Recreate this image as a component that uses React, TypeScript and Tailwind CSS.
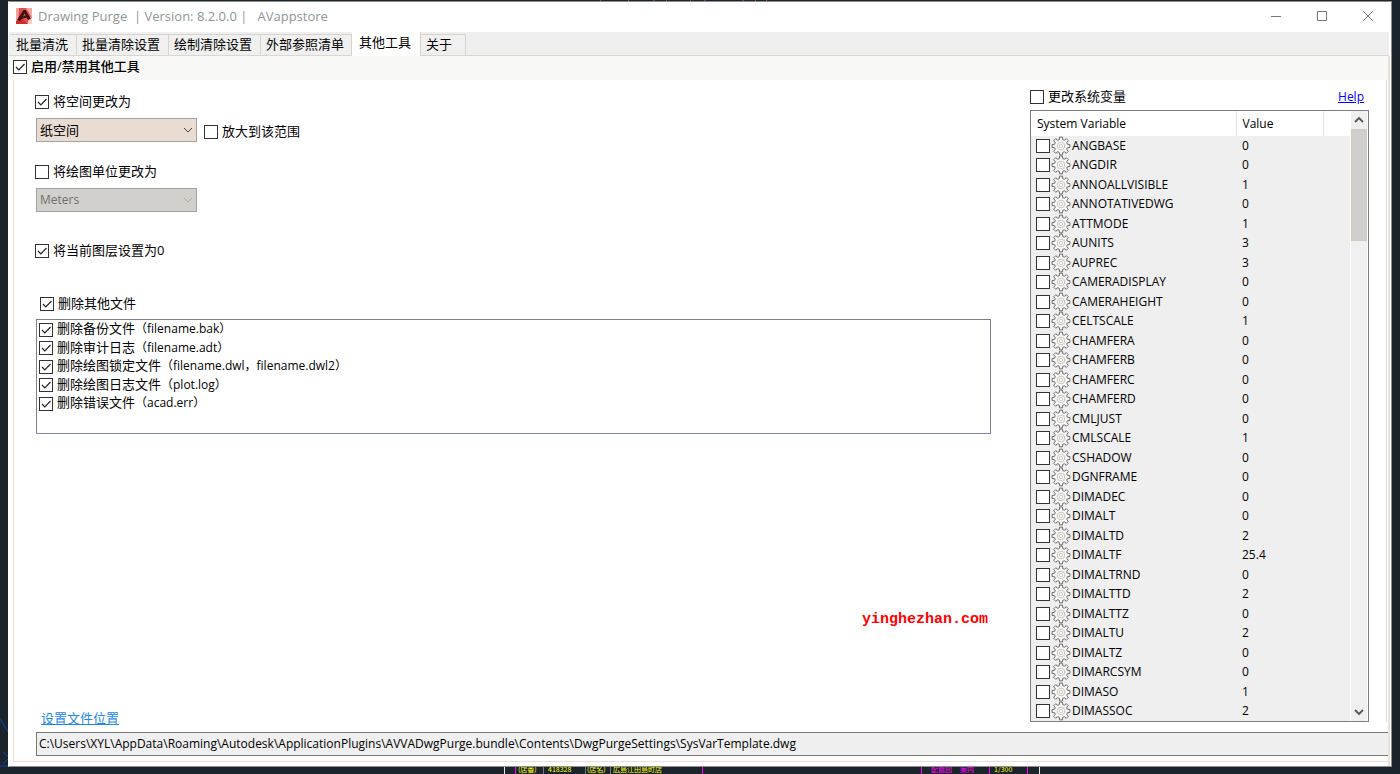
import { useState } from "react";
import type { ReactNode } from "react";

const sysVars = [
    { name: 'ANGBASE', value: '0' },
    { name: 'ANGDIR', value: '0' },
    { name: 'ANNOALLVISIBLE', value: '1' },
    { name: 'ANNOTATIVEDWG', value: '0' },
    { name: 'ATTMODE', value: '1' },
    { name: 'AUNITS', value: '3' },
    { name: 'AUPREC', value: '3' },
    { name: 'CAMERADISPLAY', value: '0' },
    { name: 'CAMERAHEIGHT', value: '0' },
    { name: 'CELTSCALE', value: '1' },
    { name: 'CHAMFERA', value: '0' },
    { name: 'CHAMFERB', value: '0' },
    { name: 'CHAMFERC', value: '0' },
    { name: 'CHAMFERD', value: '0' },
    { name: 'CMLJUST', value: '0' },
    { name: 'CMLSCALE', value: '1' },
    { name: 'CSHADOW', value: '0' },
    { name: 'DGNFRAME', value: '0' },
    { name: 'DIMADEC', value: '0' },
    { name: 'DIMALT', value: '0' },
    { name: 'DIMALTD', value: '2' },
    { name: 'DIMALTF', value: '25.4' },
    { name: 'DIMALTRND', value: '0' },
    { name: 'DIMALTTD', value: '2' },
    { name: 'DIMALTTZ', value: '0' },
    { name: 'DIMALTU', value: '2' },
    { name: 'DIMALTZ', value: '0' },
    { name: 'DIMARCSYM', value: '0' },
    { name: 'DIMASO', value: '1' },
    { name: 'DIMASSOC', value: '2' },
];

const tabs = [
    { name: '批量清洗', width: 'w-[66px]' },
    { name: '批量清除设置', width: 'w-[92px]' },
    { name: '绘制清除设置', width: 'w-[92px]' },
    { name: '外部参照清单', width: 'w-[91px]' },
    { name: '其他工具', width: 'w-[69px]' },
    { name: '关于', width: 'w-[45px]' },
];

const otherFiles = [
    { label: '删除备份文件', files: '（filename.bak）' },
    { label: '删除审计日志', files: '（filename.adt）' },
    { label: '删除绘图锁定文件', files: '（filename.dwl，filename.dwl2）' },
    { label: '删除绘图日志文件', files: '（plot.log）' },
    { label: '删除错误文件', files: '（acad.err）' },
];

const Tick = ({ id, checked = false, label }: { id?: string, checked?: boolean, label?: string }) => {
    const [on, setOn] = useState(checked);
    return (
        <span className="grid shrink-0 size-[14px]">
            <input
                id={id}
                type="checkbox"
                aria-label={label}
                checked={on}
                onChange={() => setOn(!on)}
                className="col-start-1 row-start-1 size-[14px] appearance-none border border-[#333] bg-white"
            />
            {on && (
                <svg viewBox="0 0 14 14" className="col-start-1 row-start-1 size-[14px] pointer-events-none" fill="none" stroke="#222" strokeWidth="1.2">
                    <path d="M3 7l2.800 2.800L11.500 4" />
                </svg>
            )}
        </span>
    );
};

const TickRow = ({ id, checked, children }: { id: string, checked?: boolean, children: ReactNode }) => (
    <div className="flex items-center gap-1">
        <Tick id={id} checked={checked} />
        <label htmlFor={id} className="pb-[2px] whitespace-nowrap">{children}</label>
    </div>
);

const Combo = ({ label, options, disabled = false }: { label: string, options: string[], disabled?: boolean }) => (
    <span className="grid w-[161px] h-6 items-center">
        <select
            aria-label={label}
            disabled={disabled}
            className="col-start-1 row-start-1 w-full h-6 appearance-none border border-[#a3a3a3] bg-[#e9dcd2] pl-[3px] text-black disabled:bg-[#d2d0cc] disabled:text-[12px] disabled:text-[#6f6f6f] disabled:opacity-100"
        >
            {options.map(option => <option key={option}>{option}</option>)}
        </select>
        <svg viewBox="0 0 10 6" className={`col-start-1 row-start-1 justify-self-end mr-1 w-[10px] h-[6px] pointer-events-none ${disabled ? 'text-[#b5aca0]' : 'text-[#444]'}`} fill="none" stroke="currentColor">
            <path d="M1 1l4 4 4-4" />
        </svg>
    </span>
);

// eight teeth, each one with two inner and two outer corners
const gearPoints = Array.from({ length: 8 }, (_, i) =>
    [[-15, 6.6], [-9, 9], [9, 9], [15, 6.6]].map(([offset, r]) => {
        const a = ((i * 45 + offset) * Math.PI) / 180;
        return `${(10 + r * Math.sin(a)).toFixed(2)},${(10 - r * Math.cos(a)).toFixed(2)}`;
    }).join(' ')
).join(' ');

const Gear = () => (
    <svg viewBox="0 0 20 20" className="size-5 shrink-0" fill="none">
        <polygon points={gearPoints} fill="#f7f7f7" stroke="#6a6a6a" strokeLinejoin="round" />
        <circle cx="10" cy="10" r="3.800" stroke="#cdc6bd" />
        <circle cx="10" cy="10" r="1.700" stroke="#d5cec5" />
    </svg>
);

const Logo = () => (
    <svg viewBox="0 0 16 16" className="size-4">
        <path d="M0 0h16v16H0z" fill="#e2504a" />
        <path d="M0 0h3L2 16H0z" fill="#f3a49d" />
        <path d="M10 0h6v10z" fill="#f3a9a3" />
        <path d="M14 9l2 1v6h-5z" fill="#f6cfca" />
        <path d="M0 13l6-2 6 5H0z" fill="#cf2b28" />
        <path d="M1 12L7.500 2h2L15 11l-3 .8-1.500-2.300-4.500 1.300L3.500 13zM7 8.400l2.600-.7L8.500 5z" fill="#3d0d10" />
    </svg>
);

// CAD drawing that shows behind the window
const Backdrop = () => (
    <svg className="absolute inset-0 size-full" aria-hidden="true">
        <path d="M0 719l9 14M3 752l6 5M3 764l6-6M0 766h9" fill="none" stroke="#123fc0" />
        <path d="M504.500 767v7M1039.500 767v7" stroke="#e8e8e8" />
        <path d="M543.500 767v7M585.500 767v7M610.500 767v7" stroke="#777" />
        <path d="M515.500 767v7M702.500 767v7M921.500 767v7M989.500 767v7M1027.500 767v7" stroke="#f0f" />
        <path d="M600 1h1M628 1h1M666 1h1M690 1h1M755 1h1M766 1h1" stroke="#e0304a" strokeWidth="2" />
        <path d="M653 1h2M704 1h2M742 1h2" stroke="#8a2a8a" strokeWidth="2" />
        <g fontSize="7" fill="#ff0" className="font-['Noto_Sans_CJK_JP',sans-serif]">
            <text x="518" y="772">(店番)</text>
            <text x="548" y="772">418328</text>
            <text x="587" y="772">(店名)</text>
            <text x="613" y="772">広島江田島町店</text>
            <text x="994" y="772">1/300</text>
        </g>
        <g fontSize="7" fill="#f0f" className="font-['Noto_Sans_CJK_JP',sans-serif]">
            <text x="931" y="772">配置図</text>
            <text x="960" y="772">案内</text>
        </g>
    </svg>
);

export default function App() {
    const [tab, setTab] = useState('其他工具');

    return (
        <div className="relative flex flex-col min-h-screen bg-[#1c242b] px-2 pt-px pb-[7px] text-[13px] leading-4 text-black font-['Open_Sans','Noto_Sans_CJK_SC',sans-serif]">
            <Backdrop />
            <div className="relative flex flex-col flex-1 bg-white border border-[#8d8d8d] border-l-white">
                {/* Title bar */}
                <header className="flex items-center h-[30px] pl-[7px] pb-[3px] text-[#8f9696]">
                    <Logo />
                    <h1 className="ml-[6px] whitespace-pre">Drawing Purge  | Version: 8.2.0.0 |   AVappstore</h1>
                    <div className="flex ml-auto text-[#777]">
                        <button aria-label="最小化" className="flex items-center justify-center w-[46px] h-6">
                            <svg viewBox="0 0 12 12" className="size-3" stroke="currentColor"><path d="M1 6.500h10" /></svg>
                        </button>
                        <button aria-label="最大化" className="flex items-center justify-center w-[46px] h-6">
                            <svg viewBox="0 0 12 12" className="size-3" fill="none" stroke="currentColor"><path d="M1.500 1.500h9v9h-9z" /></svg>
                        </button>
                        <button aria-label="关闭" className="flex items-center justify-center w-[46px] h-6">
                            <svg viewBox="0 0 12 12" className="size-3" stroke="currentColor"><path d="M1 1l10 10M11 1L1 11" /></svg>
                        </button>
                    </div>
                </header>

                {/* Tabs */}
                <nav className="flex items-end h-6 mr-[2px] pl-[2px] bg-[#efefef] border-b border-[#dcd6d0]">
                    {tabs.map(item => (
                        <button
                            key={item.name}
                            onClick={() => setTab(item.name)}
                            className={`${item.width} border-r border-[#d8d2cb] text-left whitespace-nowrap ${tab === item.name
                                ? 'h-6 -mb-px pl-[7px] pb-1 bg-white'
                                : 'h-[21px] border-t bg-[#f0f0f0] pl-[5px] pb-[2px]'
                                }`}
                        >
                            {item.name}
                        </button>
                    ))}
                </nav>

                <main className="flex flex-col flex-1 mr-px border-r-2 border-[#eee0d8]">
                    <div className="flex items-center h-6 pl-1 pb-[2px] bg-[#f8f8f6] font-medium">
                        <TickRow id="enable-tools" checked>启用/禁用其他工具</TickRow>
                    </div>

                    <div className="flex flex-col flex-1 ml-1 mb-1 border-l border-b border-[#eadfd8]">
                        <div className="flex flex-1 gap-[39px] mr-px pl-[22px] pr-[17px] border-r border-[#dedede]">
                            <section className="flex flex-col flex-1">
                                <div className="-ml-px pt-[13px]">
                                    <TickRow id="change-space" checked>将空间更改为</TickRow>
                                </div>
                                <div className="flex items-center gap-[7px] mt-[7px]">
                                    <Combo label="空间" options={['纸空间', '模型空间']} />
                                    <div className="pt-[3px]">
                                        <TickRow id="zoom-extents">放大到该范围</TickRow>
                                    </div>
                                </div>
                                <div className="-ml-px mt-[21px]">
                                    <TickRow id="change-units">将绘图单位更改为</TickRow>
                                </div>
                                <div className="mt-[7px]">
                                    <Combo label="绘图单位" options={['Meters']} disabled />
                                </div>
                                <div className="-ml-px mt-[30px]">
                                    <TickRow id="layer-zero" checked>将当前图层设置为0</TickRow>
                                </div>
                                <div className="ml-1 mt-[35px]">
                                    <TickRow id="delete-files" checked>删除其他文件</TickRow>
                                </div>
                                <ul className="mt-[6px] h-[115px] border border-[#80808a] border-b-[#8088b0] pl-[2px]">
                                    {otherFiles.map((file, i) => (
                                        <li key={file.label} className="flex items-center odd:h-[19px] even:h-[18px]">
                                            <TickRow id={`file-${i}`} checked>
                                                {file.label}<span className="text-[12px]">{file.files}</span>
                                            </TickRow>
                                        </li>
                                    ))}
                                </ul>
                                <p className="mt-auto pr-[3px] text-right text-[15px] font-bold text-[#f00] font-['Liberation_Mono',monospace]">yinghezhan.com</p>
                                <a href="#settings" className="self-start mt-[82px] -mb-1 ml-[5px] text-[#1e88e5] underline">设置文件位置</a>
                            </section>

                            <section className="flex flex-col w-[339px]">
                                <div className="flex items-center justify-between pt-2 pr-[5px]">
                                    <TickRow id="change-vars">更改系统变量</TickRow>
                                    <a href="#help" className="text-[12px] text-[#00f] underline">Help</a>
                                </div>
                                <div className="flex flex-1 mt-1 border border-[#7d7f85] bg-[#efefef] text-[12px]">
                                    <table className="flex-1 table-fixed border-collapse text-left">
                                        <thead className="bg-white">
                                            <tr className="h-[25px]">
                                                <th className="w-[205px] pl-[6px] pt-px font-normal">System Variable</th>
                                                <th className="w-[87px] pl-[6px] pt-px border-l border-[#e5e5e5] font-normal">Value</th>
                                                <th className="border-l border-[#e5e5e5]"></th>
                                            </tr>
                                        </thead>
                                        <tbody>
                                            {sysVars.map(item => (
                                                <tr key={item.name} className="odd:h-[19px] even:h-5">
                                                    <td className="p-0 pl-[5px]">
                                                        <label className="flex items-center h-[19px]">
                                                            <Tick label={item.name} />
                                                            <span className="flex mx-px"><Gear /></span>
                                                            {item.name}
                                                        </label>
                                                    </td>
                                                    <td className="p-0 pl-[6px]">{item.value}</td>
                                                    <td></td>
                                                </tr>
                                            ))}
                                        </tbody>
                                    </table>
                                    <div className="flex flex-col w-[18px] border-x border-white bg-[#f0f0f0] text-[#555]">
                                        <button aria-label="向上滚动" className="flex items-center justify-center h-[18px]">
                                            <svg viewBox="0 0 10 6" className="w-[10px] h-[6px]" fill="none" stroke="currentColor" strokeWidth="1.800"><path d="M1 5l4-4 4 4" /></svg>
                                        </button>
                                        <div className="h-[112px] border border-[#d6c9b8] bg-[#cfcfcf]"></div>
                                        <button aria-label="向下滚动" className="flex items-center justify-center h-[18px] mt-auto">
                                            <svg viewBox="0 0 10 6" className="w-[10px] h-[6px]" fill="none" stroke="currentColor" strokeWidth="1.800"><path d="M1 1l4 4 4-4" /></svg>
                                        </button>
                                    </div>
                                </div>
                            </section>
                        </div>
                        <input
                            readOnly
                            aria-label="设置文件位置"
                            defaultValue="C:\Users\XYL\AppData\Roaming\Autodesk\ApplicationPlugins\AVVADwgPurge.bundle\Contents\DwgPurgeSettings\SysVarTemplate.dwg"
                            className="h-6 mt-[10px] mb-[5px] ml-[22px] pl-[2px] pb-px border border-r-0 border-[#777] bg-[#efefef] text-[12px]"
                        />
                    </div>
                </main>
            </div>
        </div>
    );
}
